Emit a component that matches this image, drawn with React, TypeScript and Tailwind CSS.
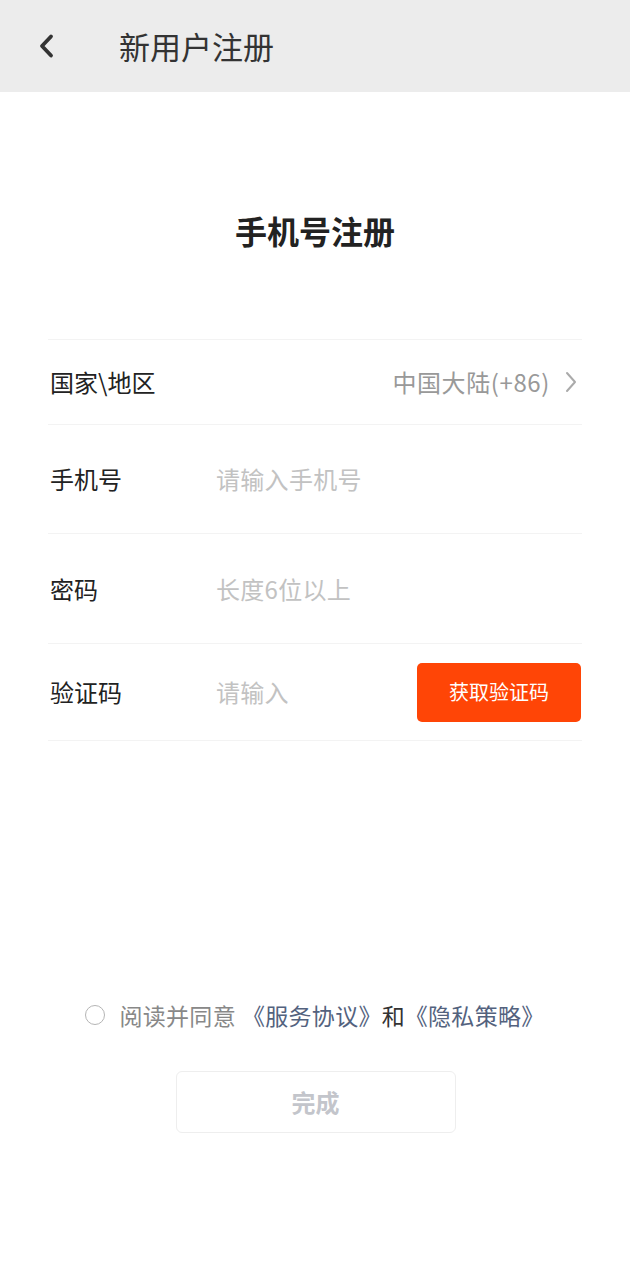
import { useState } from 'react';

const font = { fontFamily: '"Noto Sans CJK SC", "Noto Sans", sans-serif' };

export default function App() {
  const [agreed, setAgreed] = useState(false);

  return (
    <div className="min-h-screen bg-white" style={font}>
      {/* 顶部导航 */}
      <div className="h-[92px] bg-[#ececec] flex items-center">
        <button className="ml-[34px] w-[24px] h-[30px] flex items-center justify-center">
          <svg width="18" height="26" viewBox="0 0 18 26" fill="none">
            <path d="M14 3.5 L5 13 L14 22.5" stroke="#333" strokeWidth="3.8" strokeLinecap="round" strokeLinejoin="round" />
          </svg>
        </button>
        <h1 className="ml-[61px] text-[31px] leading-[40px] text-[#333]">新用户注册</h1>
      </div>

      {/* 标题 */}
      <h2 className="mt-[118px] text-center text-[32px] leading-[40px] font-bold text-[#222]">手机号注册</h2>

      {/* 表单 */}
      <div className="mx-[48px] mt-[89px] border-t border-[#f3f3f3]">
        <div className="h-[85px] flex items-center justify-between border-b border-[#f3f3f3]">
          <span className="text-[24px] text-[#222] pl-[2px]">国家\地区</span>
          <div className="flex items-center">
            <span className="text-[24px] tracking-[0.6px] text-[#999]">中国大陆(+86)</span>
            <svg className="ml-[14px] mr-[4px]" width="14" height="22" viewBox="0 0 14 22" fill="none">
              <path d="M3 2 L11 11 L3 20" stroke="#aaa" strokeWidth="2" strokeLinecap="round" strokeLinejoin="round" />
            </svg>
          </div>
        </div>

        <div className="h-[109px] flex items-center border-b border-[#f3f3f3]">
          <span className="w-[168px] text-[24px] text-[#222] pl-[2px]">手机号</span>
          <input
            className="flex-1 text-[24px] tracking-[0.3px] text-[#222] outline-none placeholder:text-[#c2c2c2] bg-transparent"
            placeholder="请输入手机号"
          />
        </div>

        <div className="h-[110px] flex items-center border-b border-[#f3f3f3]">
          <span className="w-[168px] text-[24px] text-[#222] pl-[2px]">密码</span>
          <input
            type="text"
            className="flex-1 text-[24px] tracking-[0.3px] text-[#222] outline-none placeholder:text-[#c2c2c2] bg-transparent"
            placeholder="长度6位以上"
          />
        </div>

        <div className="h-[97px] flex items-center border-b border-[#f3f3f3]">
          <span className="w-[168px] text-[24px] text-[#222] pl-[2px]">验证码</span>
          <input
            className="flex-1 min-w-0 text-[24px] tracking-[0.3px] text-[#222] outline-none placeholder:text-[#c2c2c2] bg-transparent"
            placeholder="请输入"
          />
          <button className="w-[164px] h-[59px] mr-[1px] rounded-[5px] bg-[#ff4506] text-white text-[20px]">
            获取验证码
          </button>
        </div>
      </div>

      {/* 协议 */}
      <div className="mt-[259px] flex items-center justify-center text-[23px] leading-[30px]">
        <button
          onClick={() => setAgreed(!agreed)}
          className={`w-[20px] h-[20px] rounded-full border-[1.5px] ${agreed ? 'border-[#ff4506] bg-[#ff4506]' : 'border-[#b5b5b5]'}`}
        />
        <span className="ml-[14px] tracking-[0.3px] text-[#888]">阅读并同意</span>
        <span className="ml-[6px] tracking-[0.3px] text-[#53627e]">《服务协议》</span>
        <span className="text-[#333]">和</span>
        <span className="tracking-[0.3px] text-[#53627e]">《隐私策略》</span>
      </div>

      {/* 完成 */}
      <div className="mt-[41px] flex justify-center">
        <button className="ml-[1px] w-[280px] h-[62px] rounded-[6px] border border-[#eeeeee] text-[24px] font-bold text-[#c3c5cb]">
          完成
        </button>
      </div>
    </div>
  );
}
